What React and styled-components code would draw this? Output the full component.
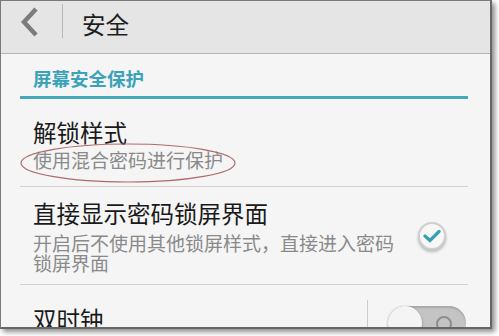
import React from "react";
import styled, { createGlobalStyle } from "styled-components";

const GlobalStyle = createGlobalStyle`
  html, body {
    margin: 0;
    padding: 0;
    background: #ffffff;
  }
  body {
    font-family: "Noto Sans CJK SC", "Noto Sans", sans-serif;
  }
`;

const Page = styled("div")`
  width: 499px;
  height: 336px;
  overflow: hidden;
`;

const Frame = styled("div")`
  position: relative;
  width: 489px;
  height: 326px;
  border: 1px solid #7a7a7a;
  border-right: 2px solid #666;
  border-bottom: 2px solid #666;
  box-shadow: 3px 3px 5px rgba(0, 0, 0, 0.45);
  background: #f5f5f5;
  overflow: hidden;
  display: flex;
  flex-direction: column;
`;

const Header = styled("div")`
  flex: none;
  height: 52px;
  display: flex;
  align-items: center;
  background: #e5e5e5;
  border-bottom: 1px solid #b4b4b4;
`;

const BackButton = styled("div")`
  width: 61px;
  height: 52px;
  display: flex;
  align-items: center;
  justify-content: center;
  padding-right: 4px;
  box-sizing: border-box;
`;

const HeaderDivider = styled("div")`
  width: 1px;
  height: 34px;
  margin-top: -12px;
  background: #b8b8b8;
`;

const HeaderTitle = styled("div")`
  margin-left: 19px;
  margin-top: -6px;
  font-size: 23.5px;
  line-height: 28px;
  color: #1e1e1e;
`;

const Content = styled("div")`
  flex: 1;
  padding: 0 22px 0 19px;
  display: flex;
  flex-direction: column;
`;

const SectionHeader = styled("div")`
  padding: 12px 0 6px 13px;
  font-size: 18.5px;
  line-height: 24px;
  font-weight: 700;
  color: #3aa3b8;
  border-bottom: 3px solid #45a9bb;
`;

const Row = styled("div")`
  position: relative;
  display: flex;
  align-items: center;
  padding: ${(props) => props.pad || "12px 0"};
  border-bottom: ${(props) => (props.last ? "none" : "1px solid #d2d2d2")};
`;

const RowText = styled("div")`
  flex: 1;
  padding-left: 13px;
  display: flex;
  flex-direction: column;
  gap: ${(props) => props.gap || "4px"};
`;

const RowTitle = styled("div")`
  font-size: 23.5px;
  line-height: 28px;
  color: #1a1a1a;
`;

const RowSummary = styled("div")`
  font-size: 19px;
  line-height: 20px;
  color: #8a8a8a;
`;

const CheckWrap = styled("div")`
  flex: none;
  width: 28px;
  height: 28px;
  margin: 0 22px 0 12px;
  border-radius: 50%;
  background: #f7f7f7;
  border: 2px solid #cfcfcf;
  box-shadow: 0 2px 3px rgba(0, 0, 0, 0.25);
  display: flex;
  align-items: center;
  justify-content: center;
  box-sizing: border-box;
`;

const SwitchArea = styled("div")`
  align-self: stretch;
  display: flex;
  align-items: flex-start;
  margin-top: 2px;
`;

const SwitchDivider = styled("div")`
  width: 1px;
  height: 40px;
  background: #cccccc;
  margin-right: 20px;
`;

const SwitchTrack = styled("div")`
  position: relative;
  width: 78px;
  height: 34px;
  margin-top: 6px;
  margin-right: 2px;
  border-radius: 17px;
  background: #c4c4c4;
  box-shadow: inset 0 2px 2px rgba(0, 0, 0, 0.15);
`;

const SwitchKnob = styled("div")`
  position: absolute;
  left: 0;
  top: 0;
  width: 34px;
  height: 34px;
  border-radius: 50%;
  background: #f4f4f4;
  box-shadow: 0 1px 3px rgba(0, 0, 0, 0.3);
`;

const SwitchRing = styled("div")`
  position: absolute;
  left: 48px;
  top: 10px;
  width: 12px;
  height: 12px;
  border-radius: 50%;
  border: 2px solid #8d8d8d;
`;

const Annotation = styled("svg")`
  position: absolute;
  left: 0;
  top: 0;
  pointer-events: none;
`;

const App = () => (
  <Page>
    <GlobalStyle />
    <Frame>
      <Header>
        <BackButton>
          <svg width="20" height="30" viewBox="0 0 20 30" style={{ marginTop: -10 }}>
            <path d="M16 2 L4 15 L16 28" fill="none" stroke="#7c7c7c" strokeWidth="4.5" />
          </svg>
        </BackButton>
        <HeaderDivider />
        <HeaderTitle>安全</HeaderTitle>
      </Header>
      <Content>
        <SectionHeader>屏幕安全保护</SectionHeader>
        <Row pad="19px 0 16px">
          <RowText gap="4px">
            <RowTitle>解锁样式</RowTitle>
            <RowSummary>使用混合密码进行保护</RowSummary>
          </RowText>
        </Row>
        <Row pad="12px 0 11px">
          <RowText gap="6px">
            <RowTitle>直接显示密码锁屏界面</RowTitle>
            <RowSummary>开启后不使用其他锁屏样式，直接进入密码锁屏界面</RowSummary>
          </RowText>
          <CheckWrap>
            <svg width="18" height="14" viewBox="0 0 18 14">
              <path d="M2 7 L7 11.5 L16 2.5" fill="none" stroke="#3a9fb2" strokeWidth="3.2" strokeLinecap="round" />
            </svg>
          </CheckWrap>
        </Row>
        <Row last pad="13px 0 0">
          <RowText>
            <RowTitle>双时钟</RowTitle>
          </RowText>
          <SwitchArea>
            <SwitchDivider />
            <SwitchTrack>
              <SwitchKnob />
              <SwitchRing />
            </SwitchTrack>
          </SwitchArea>
        </Row>
      </Content>
      <Annotation width="489" height="326">
        <ellipse cx="127" cy="162" rx="107" ry="19" fill="none" stroke="#b06a6a" strokeWidth="1.2" />
      </Annotation>
    </Frame>
  </Page>
);

export default App;
